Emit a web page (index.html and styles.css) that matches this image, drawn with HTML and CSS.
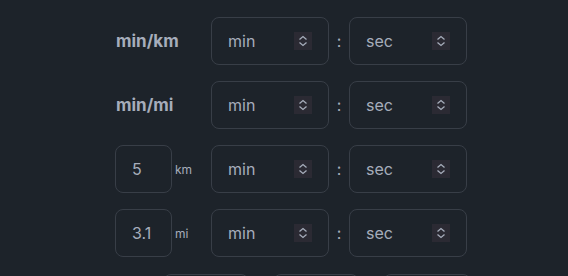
FILE: index.html
```html
<!DOCTYPE html>
<html lang="en">
<head>
<meta charset="utf-8">
<link rel="stylesheet" href="styles.css">
</head>
<body>
<main class="pace">
  <div class="row">
    <div class="label"><span class="unit-title">min/km</span></div>
    <div class="field"><span class="ph">min</span><span class="spin"><svg viewBox="0 0 18 18" width="18" height="18"><path d="M5.5 7.5 L9 4.5 L12.5 7.5 M5.5 10.5 L9 13.5 L12.5 10.5" fill="none" stroke="#a6adbb" stroke-width="1.3"/></svg></span></div>
    <div class="colon">:</div>
    <div class="field"><span class="ph">sec</span><span class="spin"><svg viewBox="0 0 18 18" width="18" height="18"><path d="M5.5 7.5 L9 4.5 L12.5 7.5 M5.5 10.5 L9 13.5 L12.5 10.5" fill="none" stroke="#a6adbb" stroke-width="1.3"/></svg></span></div>
  </div>
  <div class="row">
    <div class="label"><span class="unit-title">min/mi</span></div>
    <div class="field"><span class="ph">min</span><span class="spin"><svg viewBox="0 0 18 18" width="18" height="18"><path d="M5.5 7.5 L9 4.5 L12.5 7.5 M5.5 10.5 L9 13.5 L12.5 10.5" fill="none" stroke="#a6adbb" stroke-width="1.3"/></svg></span></div>
    <div class="colon">:</div>
    <div class="field"><span class="ph">sec</span><span class="spin"><svg viewBox="0 0 18 18" width="18" height="18"><path d="M5.5 7.5 L9 4.5 L12.5 7.5 M5.5 10.5 L9 13.5 L12.5 10.5" fill="none" stroke="#a6adbb" stroke-width="1.3"/></svg></span></div>
  </div>
  <div class="row">
    <div class="label"><span class="dist">5</span><span class="dist-unit">km</span></div>
    <div class="field"><span class="ph">min</span><span class="spin"><svg viewBox="0 0 18 18" width="18" height="18"><path d="M5.5 7.5 L9 4.5 L12.5 7.5 M5.5 10.5 L9 13.5 L12.5 10.5" fill="none" stroke="#a6adbb" stroke-width="1.3"/></svg></span></div>
    <div class="colon">:</div>
    <div class="field"><span class="ph">sec</span><span class="spin"><svg viewBox="0 0 18 18" width="18" height="18"><path d="M5.5 7.5 L9 4.5 L12.5 7.5 M5.5 10.5 L9 13.5 L12.5 10.5" fill="none" stroke="#a6adbb" stroke-width="1.3"/></svg></span></div>
  </div>
  <div class="row">
    <div class="label"><span class="dist">3.1</span><span class="dist-unit">mi</span></div>
    <div class="field"><span class="ph">min</span><span class="spin"><svg viewBox="0 0 18 18" width="18" height="18"><path d="M5.5 7.5 L9 4.5 L12.5 7.5 M5.5 10.5 L9 13.5 L12.5 10.5" fill="none" stroke="#a6adbb" stroke-width="1.3"/></svg></span></div>
    <div class="colon">:</div>
    <div class="field"><span class="ph">sec</span><span class="spin"><svg viewBox="0 0 18 18" width="18" height="18"><path d="M5.5 7.5 L9 4.5 L12.5 7.5 M5.5 10.5 L9 13.5 L12.5 10.5" fill="none" stroke="#a6adbb" stroke-width="1.3"/></svg></span></div>
  </div>
  <div class="buttons">
    <div class="btn"></div>
    <div class="btn"></div>
    <div class="btn wide"></div>
  </div>
</main>
</body>
</html>
```

FILE: styles.css
```css
html, body {
  margin: 0;
  padding: 0;
  background: #1d232a;
  color: #a6adbb;
  font-family: Inter, "Noto Sans", sans-serif;
  overflow: hidden;
}
.pace {
  padding: 17px 0 0 115px;
  display: flex;
  flex-direction: column;
  gap: 16px;
}
.row {
  display: flex;
  align-items: center;
  height: 48px;
}
.label {
  width: 96px;
  display: flex;
  align-items: center;
  height: 48px;
}
.unit-title {
  font-weight: 700;
  font-size: 17px;
  padding-left: 1px;
}
.dist {
  box-sizing: border-box;
  width: 57px;
  height: 48px;
  border: 1px solid #383e47;
  border-radius: 8px;
  display: flex;
  align-items: center;
  padding-left: 16px;
  font-size: 16px;
}
.dist-unit {
  font-size: 12px;
  margin-left: 3px;
}
.field {
  box-sizing: border-box;
  width: 118px;
  height: 48px;
  border: 1px solid #383e47;
  border-radius: 8px;
  display: flex;
  align-items: center;
  justify-content: space-between;
  padding: 0 16px 0 16px;
  font-size: 16px;
}
.ph {
  color: #a6adbb;
}
.spin {
  width: 18px;
  height: 18px;
  background: #2b2a33;
  display: flex;
}
.colon {
  width: 20px;
  text-align: center;
  font-size: 16px;
}
.buttons {
  display: flex;
  gap: 24px;
  padding-left: 48px;
  margin-top: 1px;
}
.btn {
  box-sizing: border-box;
  width: 86px;
  height: 48px;
  border: 1px solid #383e47;
  border-radius: 8px;
}
.btn.wide {
  width: 88px;
}
```
